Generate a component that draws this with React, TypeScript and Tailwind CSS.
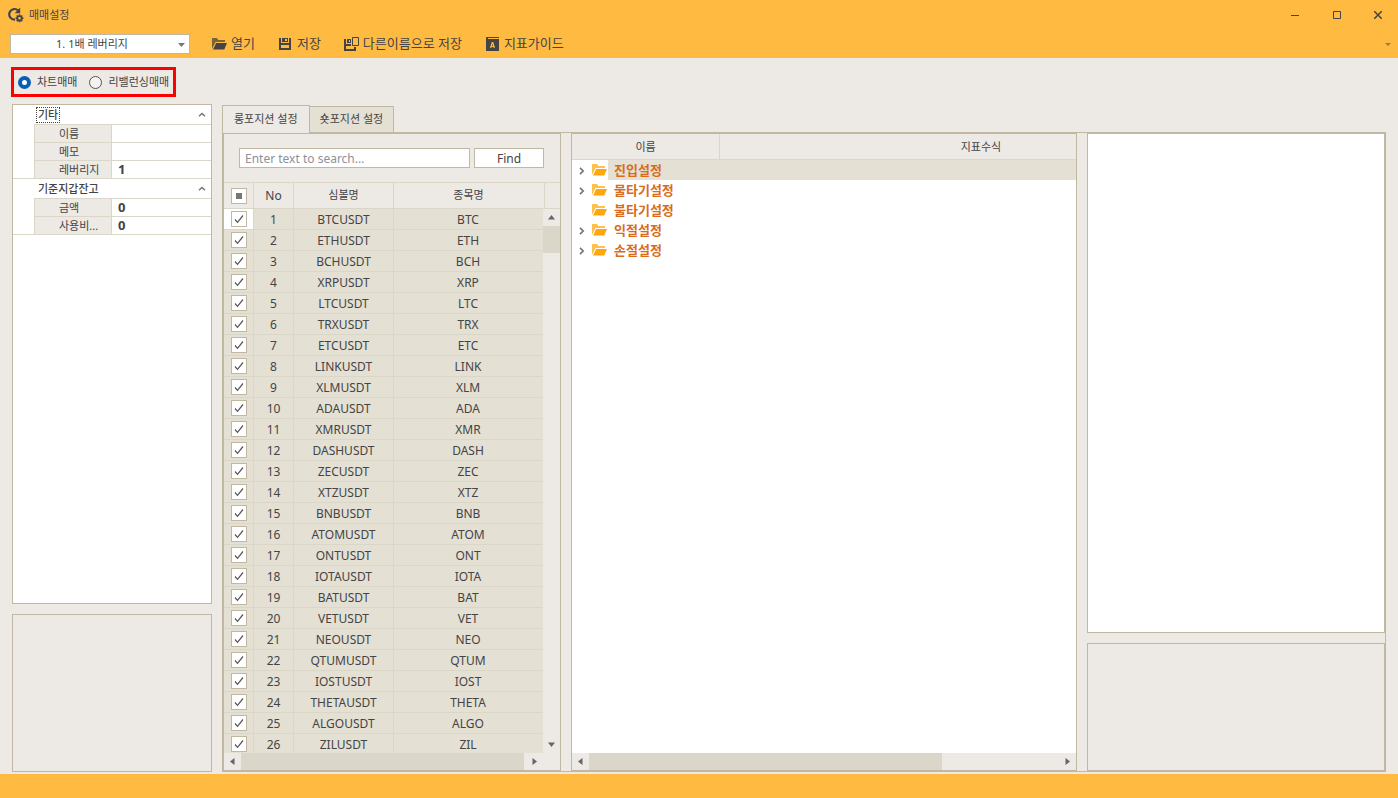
import { useState } from "react";
import type { ReactNode } from "react";
import { clsx } from "clsx";

const symbols = [
  "BTC", "ETH", "BCH", "XRP", "LTC", "TRX", "ETC", "LINK", "XLM", "ADA", "XMR", "DASH", "ZEC",
  "XTZ", "BNB", "ATOM", "ONT", "IOTA", "BAT", "VET", "NEO", "QTUM", "IOST", "THETA", "ALGO", "ZIL",
];

const treeNodes = [
  { label: "진입설정", expandable: true },
  { label: "물타기설정", expandable: true },
  { label: "불타기설정", expandable: false },
  { label: "익절설정", expandable: true },
  { label: "손절설정", expandable: true },
];

const propertyGroups = [
  {
    title: "기타",
    rows: [
      { id: "name", label: "이름", value: "" },
      { id: "memo", label: "메모", value: "" },
      { id: "leverage", label: "레버리지", value: "1" },
    ],
  },
  {
    title: "기준지갑잔고",
    rows: [
      { id: "amount", label: "금액", value: "0" },
      { id: "ratio", label: "사용비...", value: "0" },
    ],
  },
];

function AppIcon() {
  return (
    <svg width="16" height="16" viewBox="0 0 16 16" fill="none">
      <path d="M7 12.600A5.300 5.300 0 1 1 10 3.300" stroke="#444" strokeWidth="2.200" />
      <path d="M12.200.5v5.700H6.800z" fill="#444" />
      <circle cx="11.500" cy="11.300" r="2.200" stroke="#444" strokeWidth="1.800" />
      <path
        d="M11.500 7.300v1.500M11.500 13.800v1.500M7.500 11.300H9M14 11.300h1.500M8.700 8.500l1 1M13.300 13.100l1 1M14.300 8.500l-1 1M9.700 13.100l-1 1"
        stroke="#444"
        strokeWidth="1.500"
      />
    </svg>
  );
}

function FolderIcon({ back, front }: { back: string; front: string }) {
  return (
    <svg width="15" height="12" viewBox="0 0 15 12" className="shrink-0">
      <path d="M0 0h5l1.400 2H13v2H3.600L0 11z" fill={back} />
      <path d="M4.200 5H15l-2.700 6.500H1z" fill={front} />
    </svg>
  );
}

function SaveIcon() {
  return (
    <svg width="15" height="14" viewBox="0 0 15 14" fillRule="evenodd">
      <path d="M1 1h2v5h8V1h2v12H1zM3 8v3h8V8z" fill="#444" />
      <path d="M4 1h6v4H4zM7 2v2h2V2z" fill="#444" />
    </svg>
  );
}

function SaveAsIcon() {
  return (
    <svg width="15" height="14" viewBox="0 0 15 14" fillRule="evenodd">
      <path d="M0 2h2v5h5v2H2v3h8v-2h2v4H0z" fill="#444" />
      <path d="M3 2h4v4H3zM5 3v2h1V3z" fill="#444" />
      <path d="M8.500.5h6v8h-6z" fill="none" stroke="#444" />
    </svg>
  );
}

function GuideIcon() {
  return (
    <svg width="15" height="14" viewBox="0 0 15 14">
      <path d="M1 3V1a1 1 0 0 1 1-1h12v1H3v1h11v12H1z" fill="#444" />
      <path d="M5.600 11 7.200 5.500h.6L9.400 11M6.200 9.300h2.600" fill="none" stroke="#ffba42" strokeWidth="1.200" />
    </svg>
  );
}

const arrowPaths = {
  up: "M4.500 2 8 6.500H1z",
  down: "M4.500 7 1 2.500h7z",
  left: "M2 4.500 6.500 1v7z",
  right: "M7 4.500 2.500 1v7z",
};

function ScrollButton({ dir }: { dir: keyof typeof arrowPaths }) {
  return (
    <button type="button" aria-label={dir} className="flex size-[17px] shrink-0 items-center justify-center bg-[#ede9e4]">
      <svg width="9" height="9" viewBox="0 0 9 9">
        <path d={arrowPaths[dir]} fill="#666" />
      </svg>
    </button>
  );
}

function HScrollbar({ thumb }: { thumb: string }) {
  return (
    <div className="flex h-[17px] shrink-0 bg-[#ede9e4]">
      <ScrollButton dir="left" />
      <div className="flex-1">
        <div className={clsx("h-full bg-[#dad6ca]", thumb)} />
      </div>
      <ScrollButton dir="right" />
    </div>
  );
}

function ToolButton({ icon, children }: { icon: ReactNode; children: ReactNode }) {
  return (
    <button type="button" className="flex items-center gap-1 text-[13px]">
      {icon}
      {children}
    </button>
  );
}

function TitleBar() {
  return (
    <div className="flex h-[30px] items-center pl-2">
      <AppIcon />
      <h1 className="ml-[5px] flex-1 text-[11px]">매매설정</h1>
      <button type="button" aria-label="Minimize" className="flex h-full w-[42px] items-center justify-center">
        <svg width="8" height="9" viewBox="0 0 8 9"><path d="M0 4.500h8" stroke="#444" /></svg>
      </button>
      <button type="button" aria-label="Maximize" className="flex h-full w-[42px] items-center justify-center">
        <svg width="8" height="8" viewBox="0 0 8 8"><path d="M.5.5h7v7h-7z" fill="none" stroke="#444" /></svg>
      </button>
      <button type="button" aria-label="Close" className="flex h-full w-10 items-center justify-center">
        <svg width="8" height="8" viewBox="0 0 8 8"><path d="M0 0l8 8M8 0L0 8" stroke="#444" strokeWidth="1.500" /></svg>
      </button>
    </div>
  );
}

function Toolbar() {
  return (
    <div className="flex h-7 items-center pl-2.5">
      <div className="relative h-5 w-[180px]">
        <select
          aria-label="전략"
          className="block h-full w-full appearance-none border border-[#c1b8a4] bg-white pr-4 text-center text-[11px] leading-[18px] [text-align-last:center]"
        >
          <option>1. 1배 레버리지</option>
        </select>
        <svg width="7" height="4" viewBox="0 0 7 4" className="pointer-events-none absolute top-[9px] right-[5px]">
          <path d="M0 0h7L3.500 4z" fill="#777" />
        </svg>
      </div>
      <div className="ml-[22px] flex flex-1 gap-[23px]">
        <ToolButton icon={<FolderIcon back="#7c6338" front="#444" />}>열기</ToolButton>
        <ToolButton icon={<SaveIcon />}>저장</ToolButton>
        <ToolButton icon={<SaveAsIcon />}>다른이름으로 저장</ToolButton>
        <ToolButton icon={<GuideIcon />}>지표가이드</ToolButton>
      </div>
      <button type="button" aria-label="More" className="mr-[7px]">
        <svg width="6" height="3" viewBox="0 0 6 3"><path d="M0 0h6L3 3z" fill="#a07a3c" /></svg>
      </button>
    </div>
  );
}

function ModeRadios() {
  const [mode, setMode] = useState("차트매매");
  return (
    <div className="mx-[11px] flex h-[30px] w-fit shrink-0 items-center gap-3 border-3 border-[#ff0000] px-1 text-[11px]">
      {["차트매매", "리밸런싱매매"].map((m) => (
        <label key={m} className="flex items-center gap-1.5">
          <input
            type="radio"
            name="mode"
            checked={mode === m}
            onChange={() => setMode(m)}
            className="size-[13px] appearance-none rounded-full border border-[#555] bg-[#f4f3f1] checked:border-4 checked:border-[#0a5fb4] checked:bg-white"
          />
          {m}
        </label>
      ))}
    </div>
  );
}

function PropertyGrid() {
  return (
    <div className="flex-1 overflow-hidden border border-[#c1b8a4] bg-white">
      {propertyGroups.map((group, i) => (
        <section key={group.title} className="border-b border-[#dad6c8]">
          <div className="flex h-[19px] items-center justify-between pr-[5px] pl-[23px] text-[11px] font-medium">
            <h2 className={clsx("border border-dotted px-px leading-[14px]", i === 0 ? "border-[#444]" : "border-transparent")}>
              {group.title}
            </h2>
            <svg width="8" height="5" viewBox="0 0 8 5">
              <path d="M1 4.300 4 1.500l3 2.800" fill="none" stroke="#777" strokeWidth="1.500" />
            </svg>
          </div>
          <div className="ml-[21px] border-l border-[#dad6c8]">
            {group.rows.map((row) => (
              <div key={row.id} className="flex h-[18px] border-t border-[#dad6c8]">
                <label
                  htmlFor={row.id}
                  className="w-[77px] shrink-0 border-r border-[#dad6c8] bg-[#ede9e4] pl-6 text-[11px] leading-[17px] whitespace-nowrap"
                >
                  {row.label}
                </label>
                <input id={row.id} defaultValue={row.value} className="w-full min-w-0 px-1.5 text-[13px] leading-[17px] font-bold" />
              </div>
            ))}
          </div>
        </section>
      ))}
    </div>
  );
}

const cell = "border-r border-b border-[#dad6c8] px-0 py-0 text-center font-normal";
const textCell = "border-r border-b border-[#dad6c8] px-0 pt-0.5 pb-0 text-center leading-4";

function SymbolPanel() {
  return (
    <div className="flex w-[338px] shrink-0 flex-col border border-[#c1b8a4]">
      <div className="flex h-12 shrink-0 items-center gap-1 pr-4 pl-[15px]">
        <input
          type="text"
          aria-label="Search"
          placeholder="Enter text to search..."
          className="h-5 min-w-0 flex-1 border border-[#c1b8a4] bg-white px-[5px] text-[12px] placeholder:text-[#8f8f98]"
        />
        <button type="button" className="h-5 w-[70px] border border-[#c1b8a4] bg-white text-[12px] leading-5">
          Find
        </button>
      </div>
      <div className="flex min-h-0 flex-1 border-t border-[#dad6c8]">
        <div className="min-w-0 flex-1 overflow-hidden">
          <table className="w-full table-fixed border-separate border-spacing-0 text-[12px]">
            <thead>
              <tr className="h-[26px]">
                <th className={clsx(cell, "w-[30px]")}>
                  <input
                    type="checkbox"
                    aria-label="Select all"
                    className="mx-auto block size-4 appearance-none border border-[#c1b8a4] bg-[#777] shadow-[inset_0_0_0_4px_white]"
                  />
                </th>
                <th className={clsx(cell, "w-10")}>No</th>
                <th className={clsx(cell, "w-[100px] text-[11px]")}>심볼명</th>
                <th className="border-b border-[#dad6c8] p-0 text-[11px] font-normal">종목명</th>
              </tr>
            </thead>
            <tbody className="bg-[#e4e0d4]">
              {symbols.map((s, i) => (
                <tr key={s} className="h-[21px]">
                  <td className={clsx(cell, i === 0 && "bg-white")}>
                    <span className="relative mx-auto block size-4">
                      <input
                        type="checkbox"
                        defaultChecked
                        aria-label={s}
                        className="peer block size-4 appearance-none border border-[#c1b8a4] bg-white"
                      />
                      <svg
                        width="16"
                        height="16"
                        viewBox="0 0 16 16"
                        className="pointer-events-none absolute inset-0 hidden peer-checked:block"
                      >
                        <path d="M4 8.500 6.500 11.300 12 4.500" fill="none" stroke="#555" strokeWidth="1.200" />
                      </svg>
                    </span>
                  </td>
                  <td className={textCell}>{i + 1}</td>
                  <td className={textCell}>{s}USDT</td>
                  <td className={clsx(textCell, "border-r-[#e4e0d4]")}>{s}</td>
                </tr>
              ))}
            </tbody>
          </table>
        </div>
        <div className="flex w-[17px] shrink-0 flex-col">
          <div className="h-[26px] shrink-0 border-b border-[#dad6c8] pl-px">
            <div className="h-full border-l border-[#dad6c8]" />
          </div>
          <ScrollButton dir="up" />
          <div className="flex-1">
            <div className="h-[27px] bg-[#dad6ca]" />
          </div>
          <ScrollButton dir="down" />
        </div>
      </div>
      <div className="shrink-0 pr-[17px]">
        <HScrollbar thumb="mr-0.5" />
      </div>
    </div>
  );
}

function TreePanel() {
  return (
    <div className="flex min-w-0 flex-1 flex-col border border-[#c1b8a4] bg-white">
      <div className="flex h-[26px] shrink-0 overflow-hidden border-b border-[#dad6c8] bg-[#ede9e4] text-center text-[11px] leading-[25px]">
        <div className="w-[148px] shrink-0 border-r border-[#dad6c8]">이름</div>
        <div className="w-[522px] shrink-0">지표수식</div>
      </div>
      <ul className="flex-1">
        {treeNodes.map((node, i) => (
          <li key={node.label} className="flex h-5 items-center">
            <span className="flex w-5 shrink-0 justify-center">
              {node.expandable && (
                <svg width="6" height="9" viewBox="0 0 6 9">
                  <path d="M1 1.800 4.200 5 1 8.200" fill="none" stroke="#777" strokeWidth="1.700" />
                </svg>
              )}
            </span>
            <FolderIcon back="#ffc14d" front="#ffa60d" />
            <span
              className={clsx(
                "ml-px h-full flex-1 pl-1.5 text-[13px] leading-5 font-bold text-[#d86b1c]",
                i === 0 && "bg-[#e4e0d4]"
              )}
            >
              {node.label}
            </span>
          </li>
        ))}
      </ul>
      <HScrollbar thumb="w-3/4" />
    </div>
  );
}

export default function App() {
  return (
    <div className="flex h-screen flex-col bg-[#ede9e4] font-['Noto_Sans','Noto_Sans_CJK_KR',sans-serif] text-[#444]">
      <header className="shrink-0 bg-[#ffba42]">
        <TitleBar />
        <Toolbar />
      </header>

      <main className="flex min-h-0 flex-1 flex-col pt-[9px] pb-0.5">
        <ModeRadios />
        <div className="mt-[7px] flex min-h-0 flex-1 gap-2.5 px-3">
          <aside className="flex w-[200px] shrink-0 flex-col gap-2.5">
            <PropertyGrid />
            <div className="h-[158px] shrink-0 border border-[#c1b8a4]" />
          </aside>

          <div className="flex min-w-0 flex-1 flex-col pt-px">
            <div role="tablist" className="flex h-[27px] shrink-0 items-end text-[11px]">
              <button
                type="button"
                role="tab"
                aria-selected="true"
                className="relative -mb-px h-7 border border-b-0 border-[#c1b8a4] bg-[#ede9e4] px-[11px]"
              >
                롱포지션 설정
              </button>
              <button
                type="button"
                role="tab"
                aria-selected="false"
                className="h-[26px] border border-b-0 border-l-0 border-[#c1b8a4] bg-[#e4e0d4] px-2.5"
              >
                숏포지션 설정
              </button>
            </div>
            <div className="flex min-h-0 flex-1 gap-2.5 border border-[#c1b8a4]">
              <SymbolPanel />
              <TreePanel />
              <div className="flex w-[298px] shrink-0 flex-col gap-2.5">
                <div className="flex-1 border border-[#c1b8a4] bg-white" />
                <div className="h-32 shrink-0 border border-[#c1b8a4]" />
              </div>
            </div>
          </div>
        </div>
      </main>

      <footer className="h-6 shrink-0 bg-[#ffba42]" />
    </div>
  );
}
